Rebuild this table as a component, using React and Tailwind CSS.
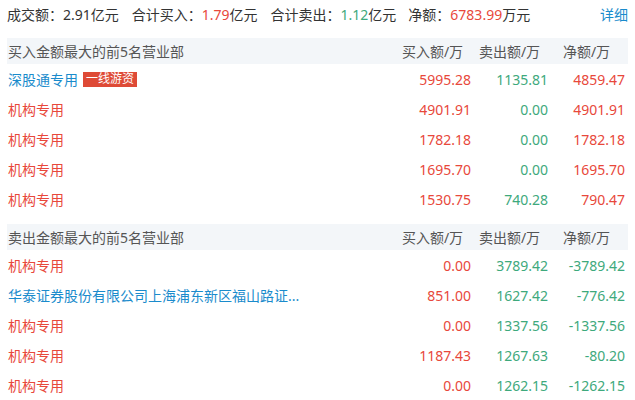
const RED = 'text-[#e8483b]';
const GREEN = 'text-[#3ea97c]';

const buyRows = [
  { name: '深股通专用', link: true, tag: '一线游资', buy: '5995.28', sell: '1135.81', net: '4859.47' },
  { name: '机构专用', buy: '4901.91', sell: '0.00', net: '4901.91' },
  { name: '机构专用', buy: '1782.18', sell: '0.00', net: '1782.18' },
  { name: '机构专用', buy: '1695.70', sell: '0.00', net: '1695.70' },
  { name: '机构专用', buy: '1530.75', sell: '740.28', net: '790.47' },
];

const sellRows = [
  { name: '机构专用', buy: '0.00', sell: '3789.42', net: '-3789.42' },
  { name: '华泰证券股份有限公司上海浦东新区福山路证...', link: true, buy: '851.00', sell: '1627.42', net: '-776.42' },
  { name: '机构专用', buy: '0.00', sell: '1337.56', net: '-1337.56' },
  { name: '机构专用', buy: '1187.43', sell: '1267.63', net: '-80.20' },
  { name: '机构专用', buy: '0.00', sell: '1262.15', net: '-1262.15' },
];

function Section({ title, rows }) {
  return (
    <div>
      <div className="grid h-[26px] grid-cols-[1fr_77px_77px_77px] items-center bg-[#f3f6f9] pr-[3px] text-[#555]">
        <span className="pl-[1px]">{title}</span>
        <span className="text-center">买入额/万</span>
        <span className="text-center">卖出额/万</span>
        <span className="text-center">净额/万</span>
      </div>
      {rows.map((r, i) => (
        <div key={i} className="grid h-[30px] grid-cols-[1fr_77px_77px_77px] items-center pr-[3px]">
          <div className="flex items-center pl-[1px]">
            <span className={r.link ? 'text-[#1a8bcc]' : RED}>{r.name}</span>
            {r.tag && (
              <span className="ml-[5px] flex h-[15px] items-center bg-[#de4a36] px-[3px] text-[12px] leading-none text-white">{r.tag}</span>
            )}
          </div>
          <span className={`text-right ${RED}`}>{r.buy}</span>
          <span className={`text-right ${GREEN}`}>{r.sell}</span>
          <span className={`text-right ${r.net.startsWith('-') ? GREEN : RED}`}>{r.net}</span>
        </div>
      ))}
    </div>
  );
}

export default function App() {
  return (
    <div className="h-[400px] w-[635px] overflow-hidden bg-white px-[7px] text-[14px] text-[#333]" style={{ fontFamily: '"Noto Sans", "Noto Sans CJK SC", sans-serif' }}>
      <div className="flex h-[28px] items-center">
        <span className="mr-[13px]">成交额：2.91亿元</span>
        <span className="mr-[13px]">合计买入：<span className={RED}>1.79</span>亿元</span>
        <span className="mr-[12px]">合计卖出：<span className={GREEN}>1.12</span>亿元</span>
        <span>净额：<span className={RED}>6783.99</span>万元</span>
        <span className="ml-auto text-[#1a8bcc]">详细</span>
      </div>
      <div className="mt-[10px]">
        <Section title="买入金额最大的前5名营业部" rows={buyRows} />
      </div>
      <div className="mt-[10px]">
        <Section title="卖出金额最大的前5名营业部" rows={sellRows} />
      </div>
    </div>
  );
}
